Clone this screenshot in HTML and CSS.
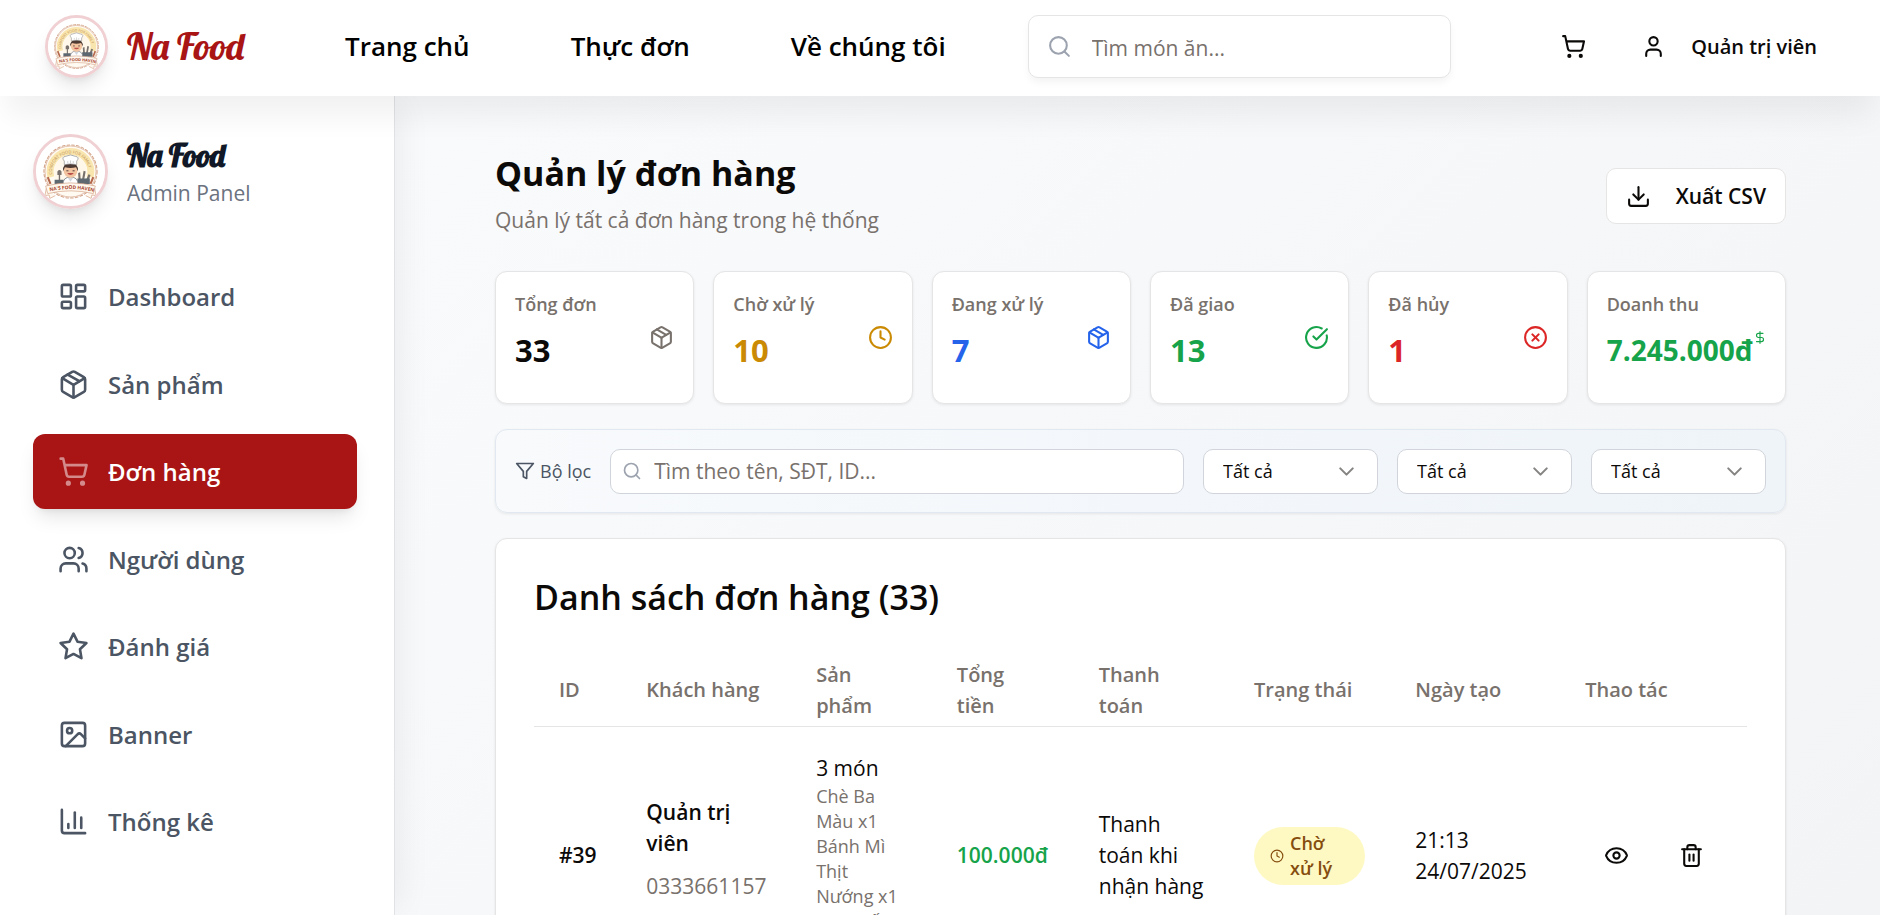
FILE: index.html
```html
<!DOCTYPE html>
<html lang="vi">
<head>
<meta charset="utf-8">
<title>Na Food - Quản lý đơn hàng</title>
<link rel="stylesheet" href="styles.css">
</head>
<body>
<svg class="sprite" aria-hidden="true">
  <symbol id="i-search" viewBox="0 0 24 24"><circle cx="11" cy="11" r="8"/><path d="m21 21-4.3-4.3"/></symbol>
  <symbol id="i-cart" viewBox="0 0 24 24"><circle cx="8" cy="21" r="1"/><circle cx="19" cy="21" r="1"/><path d="M2.05 2.05h2l2.66 12.42a2 2 0 0 0 2 1.58h9.78a2 2 0 0 0 1.95-1.57l1.65-7.43H5.12"/></symbol>
  <symbol id="i-user" viewBox="0 0 24 24"><path d="M19 21v-2a4 4 0 0 0-4-4H9a4 4 0 0 0-4 4v2"/><circle cx="12" cy="7" r="4"/></symbol>
  <symbol id="i-dash" viewBox="0 0 24 24"><rect width="7" height="9" x="3" y="3" rx="1"/><rect width="7" height="5" x="14" y="3" rx="1"/><rect width="7" height="9" x="14" y="12" rx="1"/><rect width="7" height="5" x="3" y="16" rx="1"/></symbol>
  <symbol id="i-box" viewBox="0 0 24 24"><path d="M11 21.73a2 2 0 0 0 2 0l7-4A2 2 0 0 0 21 16V8a2 2 0 0 0-1-1.73l-7-4a2 2 0 0 0-2 0l-7 4A2 2 0 0 0 3 8v8a2 2 0 0 0 1 1.73z"/><path d="M12 22V12"/><path d="m3.3 7 7.703 4.734a2 2 0 0 0 1.994 0L20.7 7"/><path d="m7.5 4.27 9 5.15"/></symbol>
  <symbol id="i-users" viewBox="0 0 24 24"><path d="M16 21v-2a4 4 0 0 0-4-4H6a4 4 0 0 0-4 4v2"/><circle cx="9" cy="7" r="4"/><path d="M22 21v-2a4 4 0 0 0-3-3.87"/><path d="M16 3.13a4 4 0 0 1 0 7.75"/></symbol>
  <symbol id="i-star" viewBox="0 0 24 24"><path d="m12 2 3.09 6.26L22 9.27l-5 4.87 1.18 6.88L12 17.77l-6.18 3.25L7 14.14 2 9.27l6.91-1.01z"/></symbol>
  <symbol id="i-image" viewBox="0 0 24 24"><rect width="18" height="18" x="3" y="3" rx="2"/><circle cx="9" cy="9" r="2"/><path d="m21 15-3.086-3.086a2 2 0 0 0-2.828 0L6 21"/></symbol>
  <symbol id="i-chart" viewBox="0 0 24 24"><path d="M3 3v16a2 2 0 0 0 2 2h16"/><path d="M18 17V9"/><path d="M13 17V5"/><path d="M8 17v-3"/></symbol>
  <symbol id="i-download" viewBox="0 0 24 24"><path d="M21 15v4a2 2 0 0 1-2 2H5a2 2 0 0 1-2-2v-4"/><path d="m7 10 5 5 5-5"/><path d="M12 15V3"/></symbol>
  <symbol id="i-clock" viewBox="0 0 24 24"><circle cx="12" cy="12" r="10"/><path d="M12 6v6l4 2"/></symbol>
  <symbol id="i-check" viewBox="0 0 24 24"><path d="M21.801 10A10 10 0 1 1 17 3.335"/><path d="m9 11 3 3L22 4"/></symbol>
  <symbol id="i-x" viewBox="0 0 24 24"><circle cx="12" cy="12" r="10"/><path d="m15 9-6 6"/><path d="m9 9 6 6"/></symbol>
  <symbol id="i-dollar" viewBox="0 0 24 24"><path d="M12 2v20"/><path d="M17 5H9.500a3.500 3.500 0 0 0 0 7h5a3.500 3.500 0 0 1 0 7H6"/></symbol>
  <symbol id="i-filter" viewBox="0 0 24 24"><path d="M22 3H2l8 9.460V19l4 2v-8.540z"/></symbol>
  <symbol id="i-down" viewBox="0 0 24 24"><path d="m6 9 6 6 6-6"/></symbol>
  <symbol id="i-eye" viewBox="0 0 24 24"><path d="M2.062 12.348a1 1 0 0 1 0-.696 10.750 10.750 0 0 1 19.876 0 1 1 0 0 1 0 .696 10.750 10.750 0 0 1-19.876 0"/><circle cx="12" cy="12" r="3"/></symbol>
  <symbol id="i-trash" viewBox="0 0 24 24"><path d="M3 6h18"/><path d="M19 6v14a2 2 0 0 1-2 2H7a2 2 0 0 1-2-2V6"/><path d="M8 6V4a2 2 0 0 1 2-2h4a2 2 0 0 1 2 2v2"/><path d="M10 11v6"/><path d="M14 11v6"/></symbol>
  <symbol id="logo" viewBox="0 0 100 100">
    <circle cx="50" cy="50" r="50" fill="#fff"/>
    <circle cx="50" cy="50" r="37" fill="#fffaf2" stroke="#d3a388" stroke-width="1"/>
    <circle cx="50" cy="50" r="38.500" fill="none" stroke="#d3a388" stroke-width="1.500" stroke-linecap="round" stroke-dasharray="4 3"/>
    <path d="M21.500 58A29.500 29.500 0 1 1 78.500 58" fill="none" stroke="#f9e5ae" stroke-width="10"/>
    <circle cx="50" cy="50" r="24" fill="#fff8ea"/>
    <path d="M17 58l4 10M83 58l-4 10" stroke="#b5694c" stroke-width="3"/>
    <path id="arc" d="M23.500 56A27 27 0 1 1 76.500 56" fill="none"/>
    <text class="seal-text" fill="#b98a4c" font-size="6"><textPath href="#arc" startOffset="2%">COMFORT FOOD FOR FAMILY</textPath></text>
    <path d="M33 68V54h2v14zM31 50q3-4 6 0v5h-6zM66 66l3-17 3 1-3 16zM62 66l-1-14 3-1 1 15zM71 66l5-12 3 1-4 12z" fill="#77706c"/>
    <path d="M27 62h13v6H27zM60 60h18v8H60z" fill="#5d6870"/>
    <path d="M39 69q0-11 11-11t11 11z" fill="#fff" stroke="#5b6470" stroke-width="1"/>
    <path d="M46 59h8l-4 6z" fill="#d0d6de"/>
    <circle cx="50" cy="49" r="10" fill="#f2c5a0"/>
    <path d="M39 50q-1-12 11-12t11 12l-3-6q-8 2-16 0z" fill="#4d3a33"/>
    <path d="M44 49h3M53 49h3" stroke="#443333" stroke-width="1.300"/><path d="M45 52q5 6 10 0z" fill="#b8504a"/>
    <path d="M41 40v-5q-5-6 2-7 7-4 14 0 7 1 2 7v5q-9-2-18 0z" fill="#fff" stroke="#888" stroke-width="1"/>
    <path d="M46 35v3M50 34v4M54 35v3" stroke="#aaa" stroke-width=".8"/>
    <path d="M15 74l-2 11 6-1 1 5 8-4M85 74l2 11-6-1-1 5-8-4" fill="#fff8ee" stroke="#d3a388" stroke-width="1"/>
    <path d="M14 71q36-9 72 0l-3 11q-33-8-66 0z" fill="#fff8ee" stroke="#d3a388" stroke-width="1"/>
    <path id="ribbon" d="M18 79q32-7 64 0" fill="none"/>
    <text class="seal-text" fill="#a8452c" font-size="7" font-weight="700"><textPath href="#ribbon" startOffset="3%">NA'S FOOD HAVEN</textPath></text>
  </symbol>
</svg>

<header class="topbar">
  <a class="brand" href="#">
    <svg class="seal seal-sm" role="img" aria-label="Na Food"><use href="#logo"/></svg>
    <span class="brand-name">Na Food</span>
  </a>
  <nav class="topnav">
    <a href="#">Trang chủ</a>
    <a href="#">Thực đơn</a>
    <a href="#">Về chúng tôi</a>
  </nav>
  <label class="field site-search">
    <svg class="icon"><use href="#i-search"/></svg>
    <input type="search" placeholder="Tìm món ăn..." aria-label="Tìm món ăn">
  </label>
  <div class="account">
    <button class="ghost" aria-label="Giỏ hàng"><svg class="icon"><use href="#i-cart"/></svg></button>
    <button class="ghost user"><svg class="icon"><use href="#i-user"/></svg>Quản trị viên</button>
  </div>
</header>

<div class="shell">
  <aside class="sidebar">
    <div class="panel-brand">
      <svg class="seal seal-lg" role="img" aria-label="Na Food"><use href="#logo"/></svg>
      <div>
        <div class="panel-name">Na Food</div>
        <div class="panel-sub">Admin Panel</div>
      </div>
    </div>
    <nav class="menu">
      <a href="#"><svg class="icon"><use href="#i-dash"/></svg>Dashboard</a>
      <a href="#"><svg class="icon"><use href="#i-box"/></svg>Sản phẩm</a>
      <a href="#" class="active" aria-current="page"><svg class="icon"><use href="#i-cart"/></svg>Đơn hàng</a>
      <a href="#"><svg class="icon"><use href="#i-users"/></svg>Người dùng</a>
      <a href="#"><svg class="icon"><use href="#i-star"/></svg>Đánh giá</a>
      <a href="#"><svg class="icon"><use href="#i-image"/></svg>Banner</a>
      <a href="#"><svg class="icon"><use href="#i-chart"/></svg>Thống kê</a>
    </nav>
  </aside>

  <main class="content">
    <div class="page-head">
      <div>
        <h1>Quản lý đơn hàng</h1>
        <p>Quản lý tất cả đơn hàng trong hệ thống</p>
      </div>
      <button class="export"><svg class="icon"><use href="#i-download"/></svg>Xuất CSV</button>
    </div>

    <section class="stats">
      <div class="card stat"><div><h2>Tổng đơn</h2><strong>33</strong></div><svg class="icon muted"><use href="#i-box"/></svg></div>
      <div class="card stat"><div><h2>Chờ xử lý</h2><strong class="amber">10</strong></div><svg class="icon amber"><use href="#i-clock"/></svg></div>
      <div class="card stat"><div><h2>Đang xử lý</h2><strong class="blue">7</strong></div><svg class="icon blue"><use href="#i-box"/></svg></div>
      <div class="card stat"><div><h2>Đã giao</h2><strong class="green">13</strong></div><svg class="icon green"><use href="#i-check"/></svg></div>
      <div class="card stat"><div><h2>Đã hủy</h2><strong class="red">1</strong></div><svg class="icon red"><use href="#i-x"/></svg></div>
      <div class="card stat revenue"><div><h2>Doanh thu</h2><strong class="green">7.245.000đ</strong></div><svg class="icon green"><use href="#i-dollar"/></svg></div>
    </section>

    <section class="filters">
      <span class="filter-label"><svg class="icon"><use href="#i-filter"/></svg>Bộ lọc</span>
      <label class="field order-search">
        <svg class="icon"><use href="#i-search"/></svg>
        <input type="search" placeholder="Tìm theo tên, SĐT, ID..." aria-label="Tìm đơn hàng">
      </label>
      <label class="picker"><select aria-label="Trạng thái"><option>Tất cả</option></select><svg class="icon"><use href="#i-down"/></svg></label>
      <label class="picker"><select aria-label="Thanh toán"><option>Tất cả</option></select><svg class="icon"><use href="#i-down"/></svg></label>
      <label class="picker"><select aria-label="Thời gian"><option>Tất cả</option></select><svg class="icon"><use href="#i-down"/></svg></label>
    </section>

    <section class="card orders">
      <h2>Danh sách đơn hàng (33)</h2>
      <table>
        <colgroup><col class="c-id"><col class="c-customer"><col class="c-items"><col class="c-total"><col class="c-pay"><col class="c-status"><col class="c-date"><col></colgroup>
        <thead>
          <tr><th>ID</th><th>Khách hàng</th><th>Sản<br>phẩm</th><th>Tổng<br>tiền</th><th>Thanh<br>toán</th><th>Trạng thái</th><th>Ngày tạo</th><th>Thao tác</th></tr>
        </thead>
        <tbody>
          <tr>
            <td class="strong">#39</td>
            <td><div class="strong">Quản trị viên</div><div class="phone">0333661157</div></td>
            <td>3 món<div class="dishes">Chè Ba Màu x1<br>Bánh Mì Thịt Nướng x1<br>Cơm Tấm Sườn x1</div></td>
            <td class="strong green">100.000đ</td>
            <td>Thanh toán khi nhận hàng</td>
            <td><span class="badge"><svg class="icon"><use href="#i-clock"/></svg><span>Chờ<br>xử lý</span></span></td>
            <td>21:13 24/07/2025</td>
            <td><div class="actions"><button class="ghost" aria-label="Xem"><svg class="icon"><use href="#i-eye"/></svg></button><button class="ghost" aria-label="Xóa"><svg class="icon"><use href="#i-trash"/></svg></button></div></td>
          </tr>
        </tbody>
      </table>
    </section>
  </main>
</div>
</body>
</html>
```
FILE: styles.css
```css
* { box-sizing: border-box; }

html, body { height: 100%; }

body {
  margin: 0;
  display: flex;
  flex-direction: column;
  overflow: hidden;
  font: 400 21px/31px "Open Sans", "Noto Sans", sans-serif;
  color: #0c0a09;
  background: #fff;
}

h1, h2, p { margin: 0; }
a { color: inherit; text-decoration: none; }
button, input, select { font: inherit; color: inherit; }
input::placeholder { color: #78716c; opacity: 1; }

.sprite { position: absolute; width: 0; height: 0; }
.seal-text { font-family: "Open Sans", sans-serif; }

.icon {
  flex: none;
  width: 25px;
  height: 25px;
  fill: none;
  stroke: currentColor;
  stroke-width: 2;
  stroke-linecap: round;
  stroke-linejoin: round;
}

.muted { color: #78716c; }
.amber { color: #ca8a04; }
.blue { color: #2563eb; }
.green { color: #16a34a; }
.red { color: #dc2626; }
.strong { font-size: 21px; font-weight: 600; }

.ghost {
  display: flex;
  align-items: center;
  padding: 0;
  border: 0;
  background: none;
}

.seal {
  flex: none;
  border: 3px solid #f0d0d2;
  border-radius: 50%;
  box-shadow: 0 12px 19px -4px rgb(0 0 0 / 10%), 0 5px 8px -5px rgb(0 0 0 / 10%);
}
.seal-sm { width: 63px; height: 63px; }
.seal-lg { width: 75px; height: 75px; }

.topbar {
  position: relative;
  z-index: 2;
  flex: none;
  display: flex;
  align-items: center;
  height: 96px;
  padding: 0 63px 4px 45px;
  background: #fff;
  box-shadow: 0 25px 31px -6px rgb(0 0 0 / 6%);
}

.brand { display: flex; align-items: center; gap: 19px; width: 300px; }
.brand-name, .panel-name {
  font-family: Lobster, "Liberation Serif", serif;
  white-space: nowrap;
}
.brand-name { font-size: 37px; line-height: 48px; color: #a91515; }

.topnav { display: flex; gap: 101px; font-size: 26px; font-weight: 600; color: #000; white-space: nowrap; }

.field { position: relative; display: flex; align-items: center; }
.field .icon { position: absolute; color: #9ca3af; }
.field input {
  width: 100%;
  height: 100%;
  border: 1px solid #e5e5e5;
  border-radius: 10px;
  background: #fff;
}

.site-search { flex: 0 1 423px; height: 63px; margin-left: 82px; }
.site-search .icon { left: 19px; }
.site-search input { padding: 3px 20px 0 63px; box-shadow: 0 5px 8px -1px rgb(0 0 0 / 5%); }

.account { display: flex; align-items: center; gap: 55px; margin-left: auto; font-size: 20px; font-weight: 600; }
.user { gap: 25px; white-space: nowrap; }

.shell { flex: 1; min-height: 0; display: flex; }

.sidebar {
  position: relative;
  z-index: 1;
  flex: none;
  width: 395px;
  padding: 38px 37px 0 33px;
  border-right: 1px solid #e0e2e6;
  background: #fff;
  box-shadow: 12px 0 31px -6px rgb(0 0 0 / 6%);
}

.panel-brand { display: flex; align-items: center; gap: 19px; }
.panel-name { font-size: 31px; line-height: 44px; font-weight: 700; color: #111827; }
.panel-sub { color: #6b7280; }

.menu {
  display: grid;
  align-content: space-between;
  min-height: 600px;
  margin-top: 50px;
  font-size: 24px;
  font-weight: 600;
  color: #4b5563;
}
.menu a { display: flex; align-items: center; gap: 19px; height: 75px; padding: 0 25px; border-radius: 12px; }
.menu .icon { width: 31px; height: 31px; }
.menu .active {
  color: #fff;
  background: #a91515;
  box-shadow: 0 12px 19px -4px rgb(0 0 0 / 10%), 0 5px 8px -5px rgb(0 0 0 / 10%);
}
.menu .active .icon { opacity: .5; }

.content {
  flex: 1;
  min-width: 0;
  display: flex;
  flex-direction: column;
  gap: 25px;
  padding: 50px 94px 0 100px;
  background: linear-gradient(135deg, #f9fafb 0%, #f8f9fb 25%, #f3f4f6 100%);
}
.content > * { flex: none; }

.page-head { display: flex; justify-content: space-between; align-items: center; height: 100px; }
.page-head h1 { font-size: 34px; line-height: 48px; font-weight: 700; }
.page-head p { padding: 8px 0; color: #78716c; }

.export {
  display: flex;
  align-items: center;
  gap: 25px;
  height: 56px;
  padding: 0 19px;
  border: 1px solid #e7e5e4;
  border-radius: 10px;
  background: #fff;
  font-weight: 600;
}

.card {
  border: 1px solid #e5e5e5;
  border-radius: 12px;
  background: #fff;
  box-shadow: 0 1px 3px rgb(0 0 0 / 8%);
}

.stats { display: grid; grid-template-columns: repeat(6, 1fr); gap: 19px; }
.stat { display: flex; justify-content: space-between; align-items: center; min-width: 0; height: 133px; padding: 0 19px; }
.stat h2 { margin-bottom: 14px; font-size: 18px; line-height: 25px; font-weight: 600; color: #78716c; white-space: nowrap; }
.stat strong { display: block; font-size: 31px; line-height: 38px; margin-bottom: 14px; }
.revenue { padding-right: 18px; }
.revenue strong { font-size: 28px; }
.revenue .icon { width: 14px; }

.filters {
  display: flex;
  align-items: center;
  gap: 19px;
  height: 84px;
  padding: 0 19px;
  border: 1px solid #e2e8f0;
  border-radius: 12px;
  background: linear-gradient(90deg, #f8fafc, #f3f7fb 50%, #eff4f9);
  box-shadow: 0 1px 3px rgb(0 0 0 / 8%);
  font-size: 18px;
}
.filter-label { display: flex; align-items: center; gap: 5px; color: #4b5563; white-space: nowrap; }
.filters .icon { width: 20px; height: 20px; }
.order-search { flex: 1; height: 45px; font-size: 21px; }
.order-search .icon { left: 12px; }
.order-search input { padding: 0 12px 0 43px; border-color: #d1d5db; }

.picker { position: relative; flex: none; width: 175px; height: 45px; display: flex; align-items: center; }
.picker select {
  width: 100%;
  height: 100%;
  padding: 0 40px 0 19px;
  appearance: none;
  border: 1px solid #d1d5db;
  border-radius: 10px;
  background: #fff;
}
.filters .picker .icon { position: absolute; right: 19px; width: 25px; height: 25px; color: #868482; pointer-events: none; }

.orders { padding: 38px; }
.orders h2 { margin-bottom: 26px; font-size: 34px; line-height: 40px; font-weight: 600; }

table { width: 100%; table-layout: fixed; border-collapse: collapse; }
.c-id { width: 7.2%; }
.c-customer { width: 14%; }
.c-items { width: 11.6%; }
.c-total { width: 11.7%; }
.c-pay { width: 12.8%; }
.c-status { width: 13.3%; }
.c-date { width: 14%; }
th, td { padding: 0 25px; text-align: left; vertical-align: middle; }
th { height: 83px; padding-top: 11px; font-size: 20px; font-weight: 600; color: #78716c; border-bottom: 1px solid #e5e5e5; white-space: nowrap; }
td { padding-block: 26px; }
.phone { margin: 12px 0; color: #78716c; }
.dishes { font-size: 18px; line-height: 25px; color: #78716c; }

.badge {
  display: inline-flex;
  align-items: center;
  gap: 6px;
  min-width: 111px;
  padding: 4px 16px;
  border-radius: 29px;
  background: #fef9c3;
  color: #854d0e;
  font-size: 18px;
  line-height: 25px;
  font-weight: 600;
  vertical-align: middle;
}
.badge .icon { width: 14px; height: 14px; }

.actions { display: flex; gap: 50px; padding-left: 19px; }
```
